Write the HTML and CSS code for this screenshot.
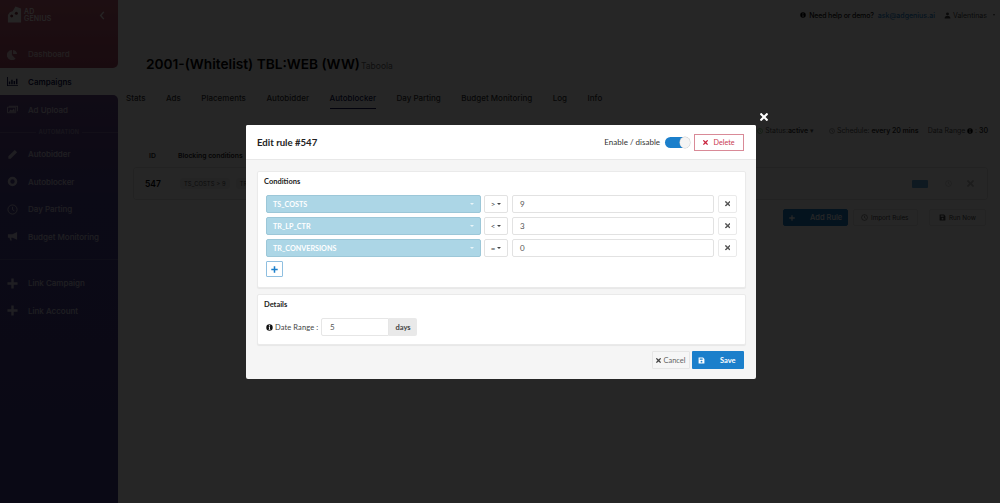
FILE: index.html
```html
<!DOCTYPE html>
<html lang="en">
<head>
<meta charset="utf-8">
<title>Edit rule #547</title>
<link rel="stylesheet" href="styles.css">
</head>
<body>
<svg class="defs" width="0" height="0" aria-hidden="true">
  <defs>
    <symbol id="times" viewBox="0 80 352 352"><path d="M242.72 256l100.07-100.07c12.28-12.28 12.28-32.19 0-44.48l-22.24-22.24c-12.28-12.28-32.19-12.28-44.48 0L176 189.28 75.93 89.21c-12.28-12.28-32.19-12.28-44.48 0L9.21 111.45c-12.28 12.28-12.28 32.19 0 44.48L109.28 256 9.21 356.07c-12.28 12.28-12.28 32.19 0 44.48l22.24 22.24c12.28 12.28 32.2 12.28 44.48 0L176 322.72l100.07 100.07c12.28 12.28 32.2 12.28 44.48 0l22.24-22.24c12.28-12.28 12.28-32.19 0-44.48L242.72 256z"/></symbol>
    <symbol id="plus" viewBox="0 0 12 12"><path d="M4.7 0.5h2.6v4.2h4.2v2.6H7.3v4.2H4.7V7.3H0.5V4.7h4.2z"/></symbol>
    <symbol id="save" viewBox="0 0 12 12"><path fill-rule="evenodd" d="M1.5 1h7.2L11 3.3v7.2c0 .3-.2.5-.5.5h-9a.5.5 0 0 1-.5-.5v-9c0-.3.2-.5.5-.5zM3 2.4v2.3h5V2.4zM6 6.4a1.6 1.6 0 1 0 0 3.2 1.6 1.6 0 0 0 0-3.2z"/></symbol>
    <symbol id="info" viewBox="0 0 12 12"><path fill-rule="evenodd" d="M6 .5a5.5 5.5 0 1 1 0 11 5.5 5.5 0 0 1 0-11zM5 2.3v1.9h2V2.3zM4.6 5.2v1h.6v2.5h-.6v1h2.8v-1h-.6V5.2z"/></symbol>
    <symbol id="clock" viewBox="0 0 12 12"><circle cx="6" cy="6" r="5" fill="none" stroke="currentColor" stroke-width="1"/><path d="M6 3v3.2l2 1.2" fill="none" stroke="currentColor"/></symbol>
  </defs>
</svg>

<div class="app">
  <aside class="sidebar">
    <div class="side-top">
      <div class="brand">
        <svg class="logo" viewBox="0 0 16 18"><path fill="currentColor" d="M9 0l6 2v15H1V9l2-3 3-1z"/><circle cx="5" cy="10" r="1.6" fill="#7a2a3a"/><circle cx="10" cy="7" r="1.6" fill="#7a2a3a"/></svg>
        <span class="brand-name">AD<br>GENIUS</span>
        <svg class="collapse" viewBox="0 0 6 10"><path d="M5 1L1.5 5 5 9" fill="none" stroke="currentColor" stroke-width="1.6"/></svg>
      </div>
      <a class="nav-item nav-first"><svg class="nav-icon" viewBox="0 0 12 12"><path fill="currentColor" d="M5.4 1v5.6l4 4A5.6 5.6 0 1 1 5.4 1zM6.6 1A5 5 0 0 1 11 5.4H6.6z"/></svg>Dashboard</a>
    </div>
    <a class="nav-item nav-active"><svg class="nav-icon" viewBox="0 0 12 12"><path fill="currentColor" d="M0 1h1v9h11v1H0zM2 6h1.6v3H2zM4.6 4h1.600v5H4.6zM7.2 5.5h1.6V9H7.2zM9.8 3h1.6v6H9.8z"/></svg>Campaigns</a>
    <div class="side-bottom">
      <a class="nav-item nav-upload"><svg class="nav-icon" viewBox="0 0 12 12"><path fill="none" stroke="currentColor" d="M.5 3.5h9v6h-9z"/><path fill="currentColor" d="M2 8.5l2-2.5 1.5 1.3L7.5 5l1.2 3.5zM2 2h10v6h-1V3H2z"/></svg>Ad Upload</a>
      <div class="nav-divider"><span>AUTOMATION</span></div>
      <a class="nav-item"><svg class="nav-icon" viewBox="0 0 12 12"><path fill="currentColor" d="M8.5 1l2.5 2.500-7 7H1.500V8z"/></svg>Autobidder</a>
      <a class="nav-item"><svg class="nav-icon" viewBox="0 0 12 12"><path fill="currentColor" fill-rule="evenodd" d="M6 .8a5.200 5.200 0 1 1 0 10.400A5.200 5.200 0 0 1 6 .8zM6 3.600a2.400 2.400 0 1 0 0 4.800 2.400 2.400 0 0 0 0-4.800z"/></svg>Autoblocker</a>
      <a class="nav-item"><svg class="nav-icon"><use href="#clock"/></svg>Day Parting</a>
      <a class="nav-item"><svg class="nav-icon" viewBox="0 0 12 12"><path fill="currentColor" d="M11 1v8.500L6 7.300H4.500l.8 3H3.500l-.8-3H1V3.500h5z"/></svg>Budget Monitoring</a>
      <div class="nav-rule"></div>
      <a class="nav-item"><svg class="nav-icon"><use href="#plus" fill="currentColor"/></svg>Link Campaign</a>
      <a class="nav-item"><svg class="nav-icon"><use href="#plus" fill="currentColor"/></svg>Link Account</a>
    </div>
  </aside>

  <main class="content">
    <header class="topbar">
      <svg class="top-icon"><use href="#info"/></svg>
      <span class="help">Need help or demo?</span>
      <a class="mail">ask@adgenius.ai</a>
      <svg class="user-icon" viewBox="0 0 12 12"><circle cx="6" cy="3.500" r="2.500" fill="currentColor"/><path fill="currentColor" d="M1 11c0-3 2-4 5-4s5 1 5 4z"/></svg>
      <span class="user">Valentinas</span>
      <i class="user-caret"></i>
    </header>

    <div class="title-row">
      <h1>2001-(Whitelist) TBL:WEB (WW)</h1>
      <span class="network">Taboola</span>
    </div>

    <nav class="tabs">
      <a>Stats</a><a>Ads</a><a>Placements</a><a>Autobidder</a><a class="tab-active">Autoblocker</a><a>Day Parting</a><a>Budget Monitoring</a><a>Log</a><a>Info</a>
    </nav>

    <div class="status-row">
      <span class="status"><svg class="status-icon status-ok"><use href="#clock"/></svg>Status:<b>active</b> ▾</span>
      <span><svg class="status-icon"><use href="#clock"/></svg>Schedule: <b>every 20 mins</b></span>
      <span>Data Range <svg class="range-icon"><use href="#info"/></svg> : <b>30</b></span>
    </div>

    <div class="table-head"><span class="col-id">ID</span><span>Blocking conditions</span></div>
    <div class="rule-card">
      <span class="rule-id">547</span>
      <div class="chips">
        <span class="chip">TS_COSTS &gt; 9</span>
        <span class="chip">TR_LP_CTR &lt; 3</span>
      </div>
      <span class="rule-spacer"></span>
      <span class="rule-toggle"></span>
      <svg class="rule-action"><use href="#clock"/></svg>
      <svg class="rule-action"><use href="#times"/></svg>
    </div>

    <div class="actions">
      <button class="bg-btn bg-primary"><svg class="bg-plus"><use href="#plus"/></svg><span>Add Rule</span></button>
      <button class="bg-btn bg-import"><svg class="bg-ico"><use href="#clock"/></svg>Import Rules</button>
      <button class="bg-btn bg-run"><svg class="bg-ico"><use href="#save"/></svg>Run Now</button>
    </div>
  </main>
</div>

<div class="backdrop"></div>

<svg class="modal-close"><use href="#times"/></svg>

<section class="modal">
  <header class="modal-head">
    <h2>Edit rule #547</h2>
    <span class="enable">Enable / disable</span>
    <span class="switch"><span class="knob"></span></span>
    <button class="delete"><svg class="delete-x"><use href="#times"/></svg>Delete</button>
  </header>
  <div class="modal-body">
    <div class="panel panel-conditions">
      <div class="panel-title">Conditions</div>
      <div class="cond-row">
        <div class="metric"><span>TS_COSTS</span><i class="metric-caret"></i></div>
        <div class="op"><span>&gt;</span><i class="op-caret"></i></div>
        <div class="value">9</div>
        <button class="remove"><svg class="remove-x"><use href="#times"/></svg></button>
      </div>
      <div class="cond-row">
        <div class="metric"><span>TR_LP_CTR</span><i class="metric-caret"></i></div>
        <div class="op"><span>&lt;</span><i class="op-caret"></i></div>
        <div class="value">3</div>
        <button class="remove"><svg class="remove-x"><use href="#times"/></svg></button>
      </div>
      <div class="cond-row">
        <div class="metric"><span>TR_CONVERSIONS</span><i class="metric-caret"></i></div>
        <div class="op"><span>=</span><i class="op-caret"></i></div>
        <div class="value">0</div>
        <button class="remove"><svg class="remove-x"><use href="#times"/></svg></button>
      </div>
      <button class="add"><svg class="add-plus"><use href="#plus"/></svg></button>
    </div>
    <div class="panel panel-details">
      <div class="panel-title">Details</div>
      <div class="range-row">
        <svg class="info"><use href="#info"/></svg>
        <span class="range-label">Date Range :</span>
        <div class="range-input">5</div>
        <div class="range-unit">days</div>
      </div>
    </div>
    <div class="modal-foot">
      <button class="cancel"><svg class="cancel-x"><use href="#times"/></svg>Cancel</button>
      <button class="save"><svg class="save-ico"><use href="#save"/></svg><span>Save</span></button>
    </div>
  </div>
</section>
</body>
</html>
```

FILE: styles.css
```css
* { box-sizing: border-box; }
html, body { margin: 0; height: 100%; }
body { font-family: "Inter", "Liberation Sans", sans-serif; background: #fff; overflow: hidden; position: relative; }
.defs { position: absolute; }
button { font: inherit; padding: 0; border: 0; background: none; }

.app { display: flex; height: 503px; }
.sidebar { width: 118px; flex: none; display: flex; flex-direction: column; background: #fff; color: #fff; font-size: 8px; font-weight: 500; }
.side-top { height: 68px; background: linear-gradient(180deg, #c46078, #a84c68); border-radius: 0 0 5px 0; display: flex; flex-direction: column; }
.side-bottom { flex: 1; background: linear-gradient(180deg, #6c4a8c 0, #4d4292 25%, #46408e 100%); border-radius: 0 5px 0 0; display: flex; flex-direction: column; }
.brand { display: flex; align-items: center; height: 30px; padding: 0 0 0 7px; }
.logo { width: 15px; height: 18px; color: #fff; margin-right: 2px; flex: none; opacity: .9; }
.brand-name { font-size: 7px; line-height: 7.5px; font-weight: 500; letter-spacing: .2px; }
.collapse { width: 6px; height: 9px; margin-left: 47px; opacity: .9; }
.nav-item { display: flex; align-items: center; height: 27.5px; padding-left: 7px; white-space: nowrap; opacity: .72; }
.nav-first { margin-top: 10px; height: 28px; }
.nav-active { color: #0e1350; font-weight: 600; opacity: 1; height: 27px; }
.nav-upload { margin-top: 1px; }
.nav-icon { width: 11px; height: 11px; margin-right: 10px; flex: none; fill: currentColor; }
.nav-divider { display: flex; align-items: center; justify-content: center; height: 17px; font-size: 5.5px; letter-spacing: .3px; opacity: .45; }
.nav-divider span { padding: 0 3px; }
.nav-divider::before, .nav-divider::after { content: ""; height: 1px; flex: 1; background: rgba(255,255,255,.4); }
.nav-rule { height: 1px; background: rgba(255,255,255,.16); margin: 8px 0 10px; }

.content { flex: 1; min-width: 0; padding-left: 8px; color: #111; position: relative; }
.topbar { height: 30px; display: flex; align-items: center; justify-content: flex-end; padding-right: 5px; font-size: 7px; font-weight: 500; }
.top-icon { width: 6px; height: 6px; margin-right: 3px; }
.help { letter-spacing: -.15px; }
.mail { color: #1b7fcb; margin: 0 9px 0 4px; }
.user-icon { width: 7px; height: 7px; margin-right: 2px; color: #444; }
.user { color: #444; font-weight: 400; margin-right: 6px; }
.user-caret { width: 0; height: 0; border-left: 1.500px solid transparent; border-right: 1.500px solid transparent; border-top: 2px solid #444; }

.title-row { display: flex; align-items: baseline; margin: 24px 0 0 20px; height: 20px; }
h1 { margin: 0; font-size: 13.7px; font-weight: 600; line-height: 20px; color: #000; }
.network { font-size: 8.5px; color: #666; margin-left: 1px; }

.tabs { display: flex; gap: 20.5px; margin-top: 16px; font-size: 8px; font-weight: 500; color: #333; height: 23px; line-height: 14px; }
.tabs a { display: block; height: 19px; padding-top: 1px; }
.tabs .tab-active { color: #0e1350; border-bottom: 1.5px solid #0e1350; }

.status-row { display: flex; justify-content: flex-end; gap: 9px; margin-top: 11px; padding-right: 12px; font-size: 7px; color: #555; height: 12px; align-items: center; letter-spacing: -.05px; }
.status-row b { font-weight: 600; color: #333; }
.status { margin-right: 6px; }
.status-icon { width: 6px; height: 6px; margin-right: 2px; vertical-align: -1px; }
.status-ok { color: #3a3; }
.range-icon { width: 6px; height: 6px; vertical-align: -1px; }

.table-head { display: flex; margin: 13px 0 0 0; font-size: 6.8px; font-weight: 600; color: #222; height: 13px; align-items: center; }
.col-id { width: 52px; padding-left: 23px; }
.rule-card { display: flex; align-items: center; height: 33px; margin: 5px 12px 0 7px; border: 1px solid #e4e4e4; border-radius: 3px; padding-left: 11px; }
.rule-id { font-size: 8.5px; font-weight: 600; width: 35px; color: #000; }
.chips { display: flex; width: 66px; overflow: hidden; }
.chip { font-size: 5.8px; background: #eee; color: #555; padding: 2px 4px; border-radius: 3px; margin-right: 6px; white-space: nowrap; letter-spacing: .1px; flex: none; }
.rule-spacer { flex: 1; }
.rule-toggle { width: 16px; height: 8px; background: #1b7fcb; margin-right: 17px; border-radius: 1px; opacity: .7; }
.rule-action { width: 7px; height: 7px; margin-right: 15px; color: #bbb; fill: #bbb; }
.rule-action:last-child { margin-right: 13px; }
.actions { display: flex; justify-content: flex-end; align-items: center; gap: 7px; margin-top: 9px; padding-right: 14px; font-size: 6.3px; color: #444; }
.bg-btn { height: 17px; display: flex; align-items: center; border: 1px solid #e8e8e8; border-radius: 2px; color: #444; white-space: nowrap; }
.bg-primary { width: 65px; background: #1b7fcb; border-color: #1b7fcb; color: #fff; font-size: 7.5px; font-weight: 500; padding-left: 5px; }
.bg-plus { width: 6px; height: 6px; fill: #fff; margin-right: 15px; }
.bg-import { width: 65px; padding-left: 7px; margin: 0 4px 0 -2px; }
.bg-run { width: 57px; padding-left: 9px; }
.bg-ico { width: 7px; height: 7px; margin-right: 3px; fill: #444; }

.backdrop { position: absolute; inset: 0; background: rgba(0,0,0,.85); }
.modal-close { position: absolute; left: 760px; top: 113px; width: 8px; height: 8px; fill: #fff; }

.modal { position: absolute; left: 246px; top: 125px; width: 510px; height: 254px; background: #f5f5f5; border-radius: 2px; font-family: "Lato", "Liberation Sans", sans-serif; color: #333; display: flex; flex-direction: column; overflow: hidden; }
.modal-head { height: 35px; flex: none; background: #fff; border-bottom: 1px solid #e8e8e8; display: flex; align-items: center; padding: 0 12px 0 11px; }
h2 { margin: 0; font-size: 9.6px; font-weight: 700; color: #222; flex: 1; }
.enable { font-size: 8px; color: #333; margin-right: 5px; }
.switch { width: 25px; height: 11px; border-radius: 6px; background: #1b7fcb; display: flex; justify-content: flex-end; margin-right: 4px; }
.knob { width: 10px; height: 11px; border-radius: 50%; background: #f4f4f4; box-shadow: 0 0 0 .5px #ccc; }
.delete { width: 50px; height: 17px; border: 1px solid #d98a97; color: #c9384f; font-size: 7.2px; display: flex; align-items: center; justify-content: center; background: #fff; }
.delete-x { width: 5px; height: 5px; fill: #c9253f; margin-right: 5px; }

.modal-body { flex: 1; padding: 11px 10px 0 11px; display: flex; flex-direction: column; }
.panel { background: #fff; border: 1px solid #eaeaea; border-radius: 2px; box-shadow: 0 1px 1px rgba(0,0,0,.06); }
.panel-conditions { height: 117px; padding: 5px 8px 0 8px; }
.panel-title { font-size: 7.5px; font-weight: 700; color: #222; line-height: 10px; height: 10px; margin-left: -2px; }
.cond-row { display: flex; height: 18px; margin-top: 4px; gap: 3px; }
.panel-title + .cond-row { margin-top: 8px; }
.metric { width: 215px; background: #acd6e6; border: 1px solid #9cc7d8; border-radius: 2px; color: #fff; font-size: 7.2px; font-weight: 700; display: flex; align-items: center; justify-content: space-between; padding: 0 6px; }
.metric-caret { width: 0; height: 0; border-left: 2px solid transparent; border-right: 2px solid transparent; border-top: 2px solid #e8f4f8; }
.op { width: 24px; margin-right: 1px; background: #fff; border: 1px solid #e2e2e2; border-radius: 2px; font-size: 8px; display: flex; align-items: center; justify-content: center; gap: 2px; color: #444; }
.op-caret { width: 0; height: 0; border-left: 2px solid transparent; border-right: 2px solid transparent; border-top: 2.500px solid #444; }
.value { width: 202px; border: 1px solid #e2e2e2; border-radius: 2px; font-size: 8px; color: #555; display: flex; align-items: center; padding-left: 7px; margin-right: 1px; }
.remove { width: 19px; background: #fff; border: 1px solid #eaeaea; border-radius: 2px; display: flex; align-items: center; justify-content: center; }
.remove-x { width: 5.5px; height: 5.5px; fill: #555; }
.add { width: 17px; height: 16px; margin-top: 4px; border: 1px solid #8fbfe0; border-radius: 1px; background: #fff; display: flex; align-items: center; justify-content: center; }
.add-plus { width: 7px; height: 7px; fill: #1b7fcb; }

.panel-details { height: 51px; margin-top: 6px; padding: 5px 8px 0 8px; }
.range-row { display: flex; align-items: center; height: 18px; margin-top: 8px; font-size: 7.5px; color: #444; }
.info { width: 7px; height: 7px; fill: #111; margin-right: 2px; flex: none; }
.range-label { width: 46px; letter-spacing: .1px; white-space: nowrap; }
.range-input { width: 68px; height: 18px; border: 1px solid #e6e6e6; border-radius: 2px 0 0 2px; padding-left: 8px; display: flex; align-items: center; color: #555; font-size: 8px; }
.range-unit { width: 28px; height: 18px; background: #e9e9e9; border-radius: 0 2px 2px 0; display: flex; align-items: center; justify-content: center; font-weight: 700; color: #444; }

.modal-foot { display: flex; justify-content: flex-end; gap: 2px; margin-top: 6px; padding-right: 2px; font-size: 7.5px; }
.cancel { width: 38px; height: 18px; border: 1px solid #e6e6e6; background: #f6f6f6; color: #666; display: flex; align-items: center; justify-content: center; border-radius: 1px; }
.cancel-x { width: 5px; height: 5px; fill: #444; margin-right: 2px; }
.save { width: 52px; height: 18px; background: #1b7fcb; color: #fff; font-weight: 700; display: flex; align-items: center; padding-left: 6px; border-radius: 1px; }
.save-ico { width: 7px; height: 7px; fill: #fff; margin-right: 15px; }
```
